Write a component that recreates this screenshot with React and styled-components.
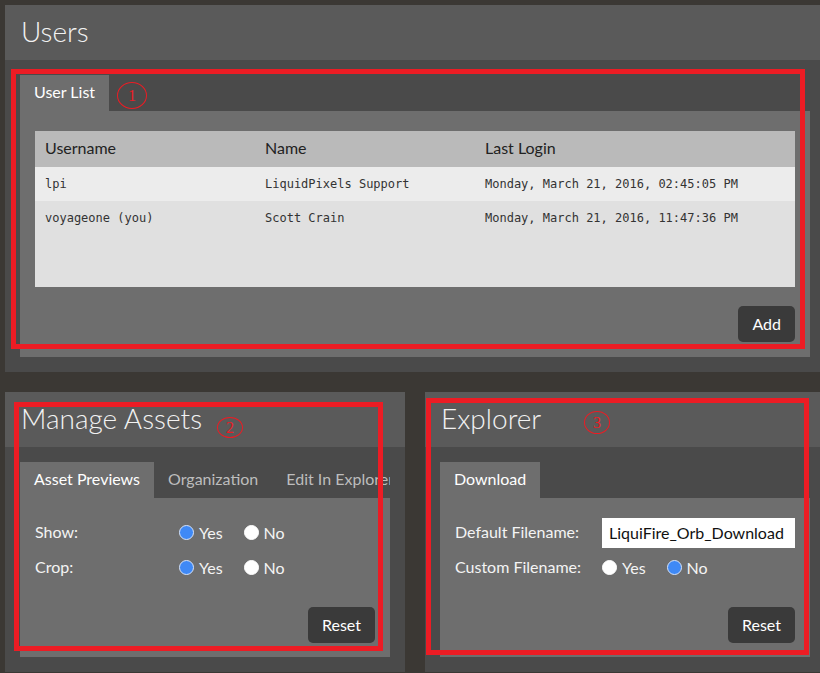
import React from 'react';
import styled, { createGlobalStyle } from 'styled-components';

const Global = createGlobalStyle`
  html, body { margin: 0; padding: 0; background: #3b3834; }
  body {
    font-family: Lato, "Open Sans", sans-serif;
    width: 820px; height: 673px; overflow: hidden;
  }
  * { box-sizing: border-box; }
`;

const Page = styled.div`
  position: relative;
  padding: 5px 0 0 5px;
  display: flex;
  flex-direction: column;
  gap: 20px;
`;

const Row = styled.div`
  display: flex;
  gap: 20px;
`;

const Panel = styled.section`
  background: #4a4a4a;
  width: ${p => p.$w}px;
  flex-shrink: 0;
`;

const PanelHeader = styled.header`
  height: 55px;
  background: #5a5a5a;
  padding-left: ${p => p.$pl || 16}px;
`;

const Title = styled.h1`
  margin: 0;
  font-weight: 300;
  font-size: 28px;
  line-height: 52px;
  color: #f2f2f2;
`;

const PanelBody = styled.div`
  padding: 15px ${p => p.$pr}px 15px 15px;
`;

const TabBar = styled.div`
  display: flex;
  overflow: hidden;
  white-space: nowrap;
`;

const Tab = styled.div`
  flex-shrink: 0;
  height: 36px;
  line-height: 34px;
  padding: 0 14px 2px;
  font-size: 16px;
  background: ${p => (p.$active ? '#6e6e6e' : 'transparent')};
  color: ${p => (p.$active ? '#ffffff' : '#bdbdbd')};
`;

const TabContent = styled.div`
  background: #6e6e6e;
  padding: 20px 15px ${p => p.$pb || 15}px;
  display: flex;
  flex-direction: column;
`;

const Table = styled.div`
  background: #e0e0e0;
  height: 156px;
  display: flex;
  flex-direction: column;
`;

const TRow = styled.div`
  display: grid;
  grid-template-columns: 220px 220px 1fr;
  align-items: center;
  height: ${p => (p.$head ? 36 : 34)}px;
  padding-bottom: ${p => (p.$head ? 4 : 0)}px;
  background: ${p => p.$bg};
`;

const Th = styled.div`
  padding-left: 10px;
  font-size: 16px;
  color: #222;
`;

const Td = styled.div`
  padding-left: 10px;
  font-family: "DejaVu Sans Mono", "Liberation Mono", monospace;
  font-size: 12px;
  color: #333;
  white-space: nowrap;
`;

const Button = styled.button`
  align-self: flex-end;
  margin-top: ${p => p.$mt}px;
  height: 36px;
  padding: 0 14px 1px;
  border: none;
  border-radius: 5px;
  background: #3a3a3a;
  color: #fff;
  font-family: Lato, sans-serif;
  font-size: 16px;
`;

const Form = styled.div`
  display: flex;
  flex-direction: column;
  gap: 5px;
`;

const FormRow = styled.div`
  display: grid;
  grid-template-columns: ${p => p.$lw}px 1fr;
  align-items: center;
  height: 30px;
`;

const Label = styled.div`
  font-size: 16px;
  color: #f4f4f4;
  padding-bottom: 3px;
`;

const Options = styled.div`
  display: flex;
  align-items: center;
  gap: 21px;
  padding-bottom: 1px;
`;

const Option = styled.label`
  display: flex;
  align-items: center;
  gap: 5px;
  font-size: 16px;
  color: #f4f4f4;
`;

const Dot = styled.span`
  width: 15px;
  height: 15px;
  border-radius: 50%;
  background: ${p => (p.$on ? '#3f89f6' : '#ffffff')};
  border: 1px solid ${p => (p.$on ? '#d6e4fb' : '#ffffff')};
`;

const TextInput = styled.div`
  width: 193px;
  height: 30px;
  line-height: 29px;
  background: #fff;
  padding-left: 7px;
  font-size: 16px;
  color: #111;
  white-space: nowrap;
  overflow: hidden;
`;

const Frame = styled.div`
  position: absolute;
  left: ${p => p.$x}px;
  top: ${p => p.$y}px;
  width: ${p => p.$w}px;
  height: ${p => p.$h}px;
  border: 5px solid #ec1c24;
  pointer-events: none;
`;

const Mark = styled.div`
  position: absolute;
  left: ${p => p.$x}px;
  top: ${p => p.$y}px;
  width: ${p => p.$w}px;
  height: ${p => p.$h}px;
  border: 1px solid #ec1c24;
  border-radius: 50%;
  display: flex;
  align-items: center;
  justify-content: center;
  font-family: "Liberation Serif", serif;
  font-size: 16px;
  color: #ec1c24;
`;

const Radio = ({ on, children }) => (
  <Option>
    <Dot $on={on} />
    {children}
  </Option>
);

const YesNo = ({ yes }) => (
  <Options>
    <Radio on={yes}>Yes</Radio>
    <Radio on={!yes}>No</Radio>
  </Options>
);

const users = [
  ['lpi', 'LiquidPixels Support', 'Monday, March 21, 2016, 02:45:05 PM'],
  ['voyageone (you)', 'Scott Crain', 'Monday, March 21, 2016, 11:47:36 PM'],
];

export default function App() {
  return (
    <>
      <Global />
      <Page>
        <Panel $w={815}>
          <PanelHeader>
            <Title>Users</Title>
          </PanelHeader>
          <PanelBody $pr={10}>
            <TabBar>
              <Tab $active>User List</Tab>
            </TabBar>
            <TabContent>
              <Table>
                <TRow $head $bg="#bababa">
                  <Th>Username</Th>
                  <Th>Name</Th>
                  <Th>Last Login</Th>
                </TRow>
                {users.map((u, i) => (
                  <TRow key={u[0]} $bg={i === 0 ? '#ececec' : '#e0e0e0'}>
                    <Td>{u[0]}</Td>
                    <Td>{u[1]}</Td>
                    <Td>{u[2]}</Td>
                  </TRow>
                ))}
              </Table>
              <Button $mt={19}>Add</Button>
            </TabContent>
          </PanelBody>
        </Panel>

        <Row>
          <Panel $w={400}>
            <PanelHeader>
              <Title>Manage Assets</Title>
            </PanelHeader>
            <PanelBody $pr={15}>
              <TabBar>
                <Tab $active>Asset Previews</Tab>
                <Tab>Organization</Tab>
                <Tab>Edit In Explorer</Tab>
              </TabBar>
              <TabContent $pb={14}>
                <Form>
                  <FormRow $lw={144}>
                    <Label>Show:</Label>
                    <YesNo yes />
                  </FormRow>
                  <FormRow $lw={144}>
                    <Label>Crop:</Label>
                    <YesNo yes />
                  </FormRow>
                </Form>
                <Button $mt={24}>Reset</Button>
              </TabContent>
            </PanelBody>
          </Panel>

          <Panel $w={395}>
            <PanelHeader $pl={16}>
              <Title>Explorer</Title>
            </PanelHeader>
            <PanelBody $pr={10}>
              <TabBar>
                <Tab $active>Download</Tab>
              </TabBar>
              <TabContent $pb={14}>
                <Form>
                  <FormRow $lw={147}>
                    <Label>Default Filename:</Label>
                    <TextInput>LiquiFire_Orb_Download</TextInput>
                  </FormRow>
                  <FormRow $lw={147}>
                    <Label>Custom Filename:</Label>
                    <YesNo yes={false} />
                  </FormRow>
                </Form>
                <Button $mt={24}>Reset</Button>
              </TabContent>
            </PanelBody>
          </Panel>
        </Row>

        <Frame $x={11} $y={69} $w={794} $h={280} />
        <Mark $x={117} $y={82} $w={30} $h={27}>1</Mark>
        <Frame $x={14} $y={402} $w={369} $h={249} />
        <Mark $x={217} $y={417} $w={26} $h={21}>2</Mark>
        <Frame $x={426} $y={398} $w={383} $h={257} />
        <Mark $x={584} $y={411} $w={26} $h={23}>3</Mark>
      </Page>
    </>
  );
}
